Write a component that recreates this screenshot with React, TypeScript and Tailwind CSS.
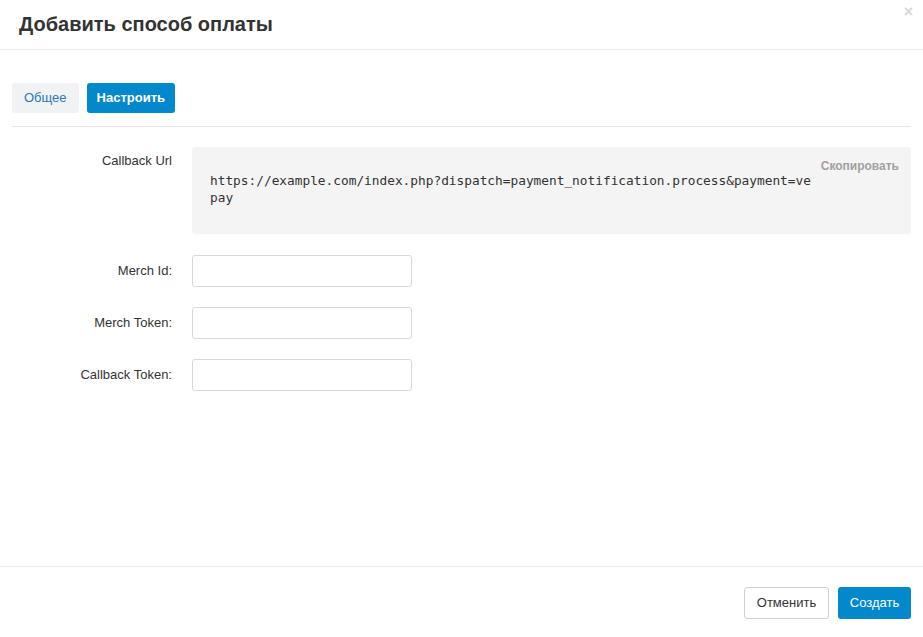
export default function App() {
  const sans = { fontFamily: '"Liberation Sans", Arial, sans-serif' };
  return (
    <div className="w-[923px] h-[637px] bg-white flex flex-col text-[#333]" style={sans}>
      <div className="relative h-[50px] border-b border-[#e9ecef] flex items-center pl-[19px] shrink-0">
        <h1 className="text-[20px] font-bold text-[#333] leading-none -mt-[2px]">Добавить способ оплаты</h1>
        <span className="absolute right-[10px] top-[4px] text-[16px] font-bold text-[#d7d7d7] leading-none">×</span>
      </div>
      <div className="flex-1 px-[12px] pt-[33px]">
        <div className="flex gap-[8px] pb-[13px] border-b border-[#e3e6ea]">
          <button className="h-[30px] px-[12px] rounded-[3px] bg-[#f1f2f3] text-[#2a7ab8] text-[13px]">Общее</button>
          <button className="h-[30px] px-[10px] rounded-[3px] bg-[#0388cc] text-white text-[13px] font-bold">Настроить</button>
        </div>
        <div className="flex mt-[20px]">
          <div className="w-[160px] text-right text-[13px] pt-[4px] text-[#333]">Callback Url</div>
          <div className="ml-[20px] w-[719px] h-[87px] bg-[#f4f4f4] rounded-[3px] relative pl-[18px] pt-[25px]">
            <span className="absolute right-[12px] top-[10px] text-[12px] font-bold text-[#a0a0a0]">Скопировать</span>
            <div className="w-[606px] break-all text-[13px] leading-[17px] text-[#333]" style={{ fontFamily: '"DejaVu Sans Mono", "Liberation Mono", monospace', fontSize: '12.8px' }}>
              https://example.com/index.php?dispatch=payment_notification.process&amp;payment=vepay
            </div>
          </div>
        </div>
        <div className="flex flex-col gap-[20px] mt-[21px]">
          {['Merch Id:', 'Merch Token:', 'Callback Token:'].map((l) => (
            <div key={l} className="flex items-center">
              <div className="w-[160px] text-right text-[13px] text-[#333]">{l}</div>
              <input className="ml-[20px] w-[220px] h-[32px] border border-[#d5d9de] rounded-[3px] bg-white" />
            </div>
          ))}
        </div>
      </div>
      <div className="h-[71px] border-t border-[#e9ecef] flex justify-end items-start pt-[20px] pr-[12px] gap-[9px] shrink-0">
        <button className="h-[32px] w-[85px] border border-[#ccd1d6] rounded-[3px] bg-white text-[13px] text-[#333]">Отменить</button>
        <button className="h-[32px] w-[73px] rounded-[3px] bg-[#0388cc] text-white text-[13px]">Создать</button>
      </div>
    </div>
  );
}
